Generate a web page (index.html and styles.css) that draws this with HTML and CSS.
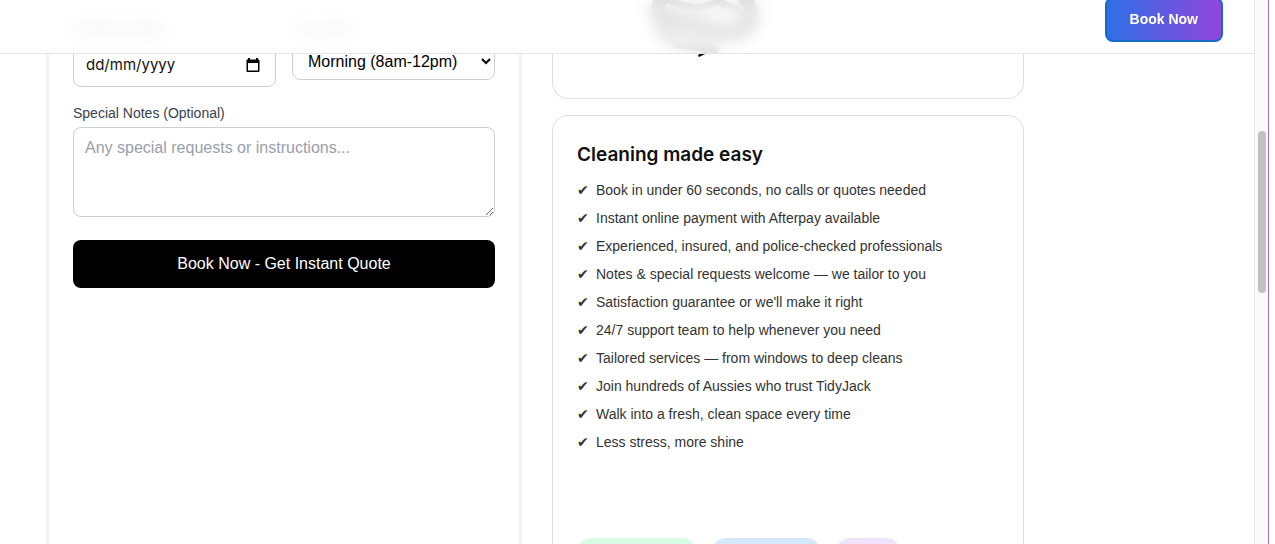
FILE: index.html
```html
<!DOCTYPE html>
<html lang="en-AU">
<head>
<meta charset="utf-8">
<title>TidyJack</title>
<link rel="stylesheet" href="styles.css">
</head>
<body>
<div class="page">
  <header class="topbar">
    <button class="topbar-cta" type="button">Book Now</button>
  </header>
  <main class="content">
    <form class="card booking">
      <div class="pair">
        <div class="field">
          <label for="date">Preferred Date</label>
          <div class="date">
            <input id="date" type="text" placeholder="dd/mm/yyyy">
            <button class="date-open" type="button" aria-label="Choose date">
              <svg viewBox="0 0 14 14" width="14" height="14"><path d="M2 0h2v1.500h6V0h2v1.500h.500q1 0 1 1V13q0 1-1 1h-11q-1 0-1-1V2.500q0-1 1-1H2zM2 5v7.500h10V5z" fill="#000" fill-rule="evenodd"/></svg>
            </button>
          </div>
        </div>
        <div class="field">
          <label for="slot">Time Slot</label>
          <select id="slot"><option>Morning (8am-12pm)</option></select>
        </div>
      </div>
      <div class="field">
        <label for="notes">Special Notes (Optional)</label>
        <textarea id="notes" rows="3" placeholder="Any special requests or instructions..."></textarea>
      </div>
      <button class="submit" type="submit">Book Now - Get Instant Quote</button>
    </form>
    <div class="side">
      <section class="card brand">
        <svg class="brand-mark" viewBox="0 0 422 74" height="74" aria-hidden="true">
          <g fill="none" stroke="#111" stroke-linecap="round">
            <path d="M84 0Q74 15 90 20L146 32Q174 35 174 16Q174 4 168 0" stroke-width="13"/>
            <path d="M92 0Q120 14 140 1L160 10" stroke-width="7"/>
            <path d="M82 30L100 44L138 49" stroke-width="8"/>
            <path d="M252 -6h45" stroke-width="10"/>
          </g>
          <path d="M121 56Q121 54 126 51L134 50Q128 55 122 57Z" fill="#111"/>
        </svg>
      </section>
      <section class="card easy">
        <h2>Cleaning made easy</h2>
        <ul>
          <li>Book in under 60 seconds, no calls or quotes needed</li>
          <li>Instant online payment with Afterpay available</li>
          <li>Experienced, insured, and police-checked professionals</li>
          <li>Notes &amp; special requests welcome — we tailor to you</li>
          <li>Satisfaction guarantee or we'll make it right</li>
          <li>24/7 support team to help whenever you need</li>
          <li>Tailored services — from windows to deep cleans</li>
          <li>Join hundreds of Aussies who trust TidyJack</li>
          <li>Walk into a fresh, clean space every time</li>
          <li>Less stress, more shine</li>
        </ul>
        <div class="chips">
          <span class="chip green"></span>
          <span class="chip blue"></span>
          <span class="chip purple"></span>
        </div>
      </section>
    </div>
  </main>
</div>
<div class="scrollbar"><div class="thumb"></div></div>
</body>
</html>
```
FILE: styles.css
```css
* {
  box-sizing: border-box;
}

body {
  margin: 0;
  height: 100vh;
  display: flex;
  overflow: hidden;
  padding-right: 6px;
  background: #fff;
  color: #111;
  font: 16px/24px "Liberation Sans", Arial, sans-serif;
}

button, input, select, textarea {
  font: inherit;
  color: #000;
  margin: 0;
}

.page {
  flex: 1;
  position: relative;
  overflow: hidden;
}

.topbar {
  position: absolute;
  z-index: 2;
  inset: 0 0 auto;
  height: 54px;
  display: flex;
  justify-content: flex-end;
  align-items: flex-end;
  padding: 0 31px 11px;
  border-bottom: 1px solid #e2e4e6;
  background: rgba(255, 255, 255, 0.85);
  backdrop-filter: blur(8px);
}

.topbar-cta {
  flex: none;
  padding: 10px 23px;
  border: 2px solid #176bc8;
  border-radius: 8px;
  background: linear-gradient(90deg, #2f70e6, #9145dc);
  color: #fff;
  font-size: 14px;
  font-weight: 700;
  line-height: 21px;
}

.content {
  display: grid;
  grid-template-columns: minmax(0, 1fr) minmax(0, 1fr);
  gap: 32px;
  max-width: 1072px;
  min-height: 100vh;
  padding: 0 48px;
}

.card {
  border: 1px solid #e0e0e2;
  background: #fff;
}

.booking {
  display: flex;
  flex-direction: column;
  gap: 16px;
  padding: 18px 24px;
  border-color: #f3f3f4;
  border-width: 0 1px;
  box-shadow: 0 1px 4px rgba(0, 0, 0, 0.14);
}

.pair {
  display: grid;
  grid-template-columns: minmax(0, 1fr) minmax(0, 1fr);
  align-items: start;
  gap: 16px;
}

.field {
  display: flex;
  flex-direction: column;
  gap: 4px;
}

.field label {
  color: #374151;
  font-size: 14px;
  line-height: 20px;
}

.date, select, textarea {
  border: 1px solid #cbcfd5;
  border-radius: 8px;
  background: #fff;
}

.date {
  display: flex;
  align-items: center;
  height: 45px;
  padding: 0 15px 0 12px;
}

.date input {
  flex: 1;
  min-width: 0;
  padding: 0;
  border: 0;
  background: none;
  font-family: Inter, sans-serif;
  font-size: 15px;
}

.date input::placeholder {
  color: #111;
}

.date-open {
  display: flex;
  padding: 0;
  border: 0;
  background: none;
}

select {
  height: 38px;
  padding: 0 11px;
}

textarea {
  display: block;
  width: 100%;
  padding: 8px 11px;
  resize: vertical;
}

textarea::placeholder {
  color: #98a0ac;
}

.submit {
  margin-top: 7px;
  padding: 12px;
  border: 0;
  border-radius: 8px;
  background: #000;
  color: #fff;
}

.side {
  display: flex;
  flex-direction: column;
  gap: 16px;
}

.brand {
  border-top: 0;
  border-radius: 0 0 16px 16px;
  padding: 0 24px 24px;
}

.brand-mark {
  display: block;
  width: 100%;
  overflow: visible;
}

.easy {
  flex: 1;
  border-bottom: 0;
  border-radius: 16px 16px 0 0;
  padding: 24px 24px 0;
}

.easy h2 {
  margin: 0 0 10px;
  font: 600 19px/30px Inter, sans-serif;
}

.easy ul {
  display: grid;
  gap: 8px;
  margin: 0;
  padding: 0;
  list-style: none;
  color: #333;
  font-size: 14px;
  line-height: 20px;
}

.easy li {
  display: flex;
  gap: 7px;
}

.easy li::before {
  content: "✔";
  width: 12px;
  font-family: "DejaVu Sans", sans-serif;
}

.chips {
  display: flex;
  gap: 16px;
  margin-top: 86px;
}

.chip {
  height: 28px;
  border-radius: 14px;
}

.green {
  width: 119px;
  background: #d9fce5;
}

.blue {
  width: 108px;
  background: #d5e7fb;
}

.purple {
  width: 64px;
  background: #f0e4fc;
}

.scrollbar {
  width: 15px;
  padding: 131px 2px 0 3px;
  border-left: 1px solid #e4e4e4;
  border-right: 1px solid #8b70ee;
  background: #fafafa;
}

.thumb {
  height: 162px;
  width: 8px;
  border-radius: 4px;
  background: #c1c1c1;
}
```
